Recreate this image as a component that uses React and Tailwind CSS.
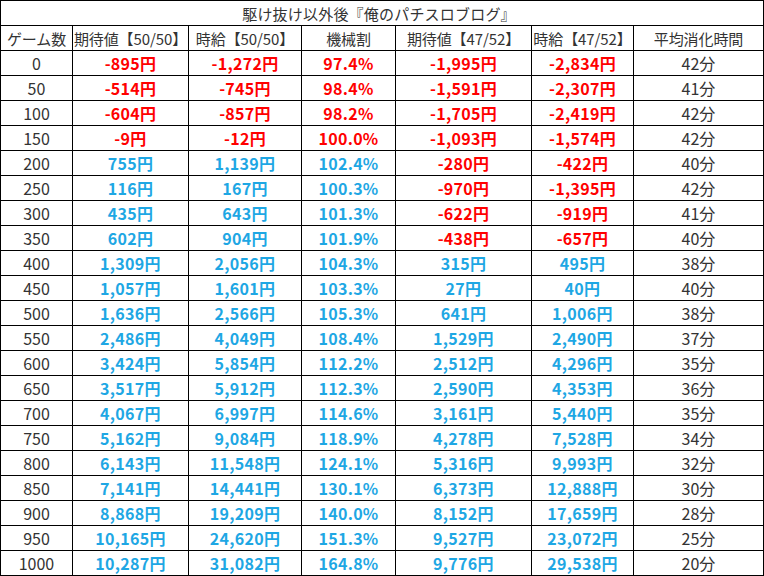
import React from "react";

const rows = [
  [0, "-895円", "-1,272円", "97.4%", "-1,995円", "-2,834円", "42分"],
  [50, "-514円", "-745円", "98.4%", "-1,591円", "-2,307円", "41分"],
  [100, "-604円", "-857円", "98.2%", "-1,705円", "-2,419円", "42分"],
  [150, "-9円", "-12円", "100.0%", "-1,093円", "-1,574円", "42分"],
  [200, "755円", "1,139円", "102.4%", "-280円", "-422円", "40分"],
  [250, "116円", "167円", "100.3%", "-970円", "-1,395円", "42分"],
  [300, "435円", "643円", "101.3%", "-622円", "-919円", "41分"],
  [350, "602円", "904円", "101.9%", "-438円", "-657円", "40分"],
  [400, "1,309円", "2,056円", "104.3%", "315円", "495円", "38分"],
  [450, "1,057円", "1,601円", "103.3%", "27円", "40円", "40分"],
  [500, "1,636円", "2,566円", "105.3%", "641円", "1,006円", "38分"],
  [550, "2,486円", "4,049円", "108.4%", "1,529円", "2,490円", "37分"],
  [600, "3,424円", "5,854円", "112.2%", "2,512円", "4,296円", "35分"],
  [650, "3,517円", "5,912円", "112.3%", "2,590円", "4,353円", "36分"],
  [700, "4,067円", "6,997円", "114.6%", "3,161円", "5,440円", "35分"],
  [750, "5,162円", "9,084円", "118.9%", "4,278円", "7,528円", "34分"],
  [800, "6,143円", "11,548円", "124.1%", "5,316円", "9,993円", "32分"],
  [850, "7,141円", "14,441円", "130.1%", "6,373円", "12,888円", "30分"],
  [900, "8,868円", "19,209円", "140.0%", "8,152円", "17,659円", "28分"],
  [950, "10,165円", "24,620円", "151.3%", "9,527円", "23,072円", "25分"],
  [1000, "10,287円", "31,082円", "164.8%", "9,776円", "29,538円", "20分"],
];

const headers = [
  "ゲーム数",
  "期待値【50/50】",
  "時給【50/50】",
  "機械割",
  "期待値【47/52】",
  "時給【47/52】",
  "平均消化時間",
];

const cell =
  "h-[25px] border-r border-b border-black flex items-center justify-center whitespace-nowrap overflow-hidden leading-none";

export default function App() {
  return (
    <div
      className="w-[764px] h-[576px] bg-white text-[#333333] text-[15px]"
      style={{ fontFamily: '"Noto Sans CJK JP", "Noto Sans", sans-serif' }}
    >
      <div className="w-[764px] border-l border-t border-black">
        <div className="h-[25px] border-r border-b border-black flex items-center justify-center pr-[6px] leading-none tracking-[0.2px]">
          駆け抜け以外後『俺のパチスロブログ』
        </div>
        <div className="grid grid-cols-[72px_116px_113px_94px_136px_102px_130px]">
          {headers.map((h, i) => (
            <div key={i} className={cell + " tracking-[-0.1px]"}>
              {h}
            </div>
          ))}
          {rows.map((r) => {
            const neg1 = r[1].startsWith("-");
            return r.map((v, i) => {
              if (i === 0 || i === 6) {
                return (
                  <div key={r[0] + "-" + i} className={cell + " text-[16px]"}>
                    {v}
                  </div>
                );
              }
              const red = i === 3 ? neg1 : String(v).startsWith("-");
              return (
                <div
                  key={r[0] + "-" + i}
                  className={
                    cell +
                    " font-bold text-[16px] tracking-[0.3px] " +
                    (red ? "text-[#ff0000]" : "text-[#1ea7e4]")
                  }
                >
                  {v}
                </div>
              );
            });
          })}
        </div>
      </div>
    </div>
  );
}
